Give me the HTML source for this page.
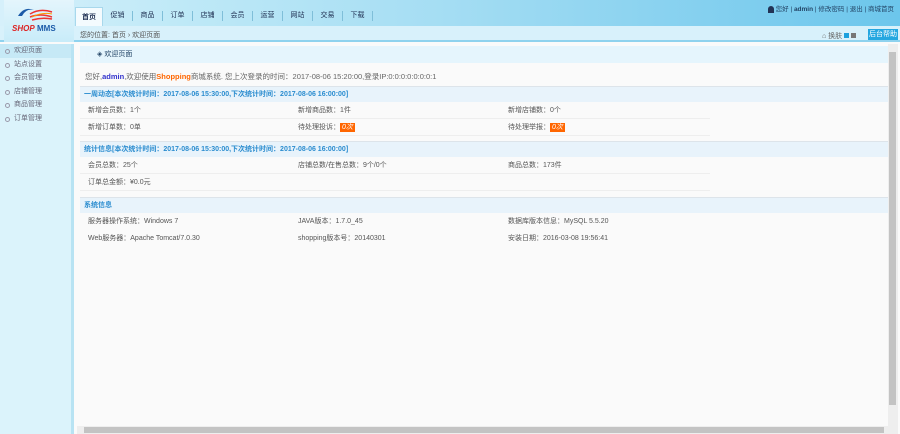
<!DOCTYPE html>
<html><head><meta charset="utf-8"><style>
*{margin:0;padding:0;box-sizing:border-box}
body{width:900px;height:434px;overflow:hidden;background:#fafafa;font-family:"Liberation Sans","Noto Sans CJK SC",sans-serif;font-size:7px;color:#555;position:relative}
.hdr{position:absolute;left:0;top:0;width:900px;height:26px;background:linear-gradient(90deg,#d6f0fb 0%,#bfe9f7 20%,#a4ddf3 50%,#6cc6ec 100%)}
.bc{position:absolute;left:0;top:26px;width:900px;height:16px;background:#d8f1fb;border-bottom:2px solid #8fd2ee}
.logo{position:absolute;left:4px;top:0;width:70px;height:42px;background:linear-gradient(#e4f5fc,#c8ecf9)}
.nav{position:absolute;left:75px;top:7px;height:19px;display:flex;white-space:nowrap}
.nav span{padding:0 7.5px;font-size:7px;color:#235;border-right:1px solid #7fbfd9;height:10px;line-height:10px;margin-top:4px}
.nav span.on{background:#f4fbfe;border:1px solid #a8d8ec;border-bottom:none;height:19px;line-height:19px;margin-top:0;font-weight:bold;padding:0 6px}
.side{position:absolute;left:0;top:44px;width:74px;height:390px;background:#dbf3fb;border-right:3px solid #b8e3f3}
.side div{height:13.5px;line-height:13.5px;padding-left:14px;color:#667;position:relative}
.side div:before{content:"";position:absolute;left:5px;top:5px;width:3px;height:3px;border:1px solid #99a;border-radius:50%}
.side div.on{background:#c6e9f6}
.main{position:absolute;left:77px;top:44px;width:811px;height:382px}
.wb{position:absolute;left:3px;top:2px;width:808px;height:17px;background:#e5f5fd;line-height:17px;padding-left:17px;color:#246;}
.sh{position:absolute;left:3px;width:808px;height:16px;background:#e8f3fb;border-top:1px solid #dde4ea;line-height:16px;padding-left:4px;color:#2a8ccf;font-weight:bold;white-space:nowrap}
.row{position:absolute;left:3px;width:630px;height:17px;border-bottom:1px solid #eee;line-height:17px;white-space:nowrap}
.row span{position:absolute}
.b{display:inline-block;background:#f60;color:#fff;padding:0 2px;line-height:9px}
.vs{position:absolute;left:888px;top:44px;width:10px;height:382px;background:#eee}
.vs i{position:absolute;left:1px;top:8px;width:7px;height:353px;background:#c3c3c3}
.hs{position:absolute;left:77px;top:426px;width:821px;height:8px;background:#eee}
.hs i{position:absolute;left:7px;top:1px;width:800px;height:6px;background:#c3c3c3}
</style></head><body>
<div class="hdr"></div>
<div class="bc"></div>
<div class="logo"><svg width="70" height="42"><path d="M14 16 q6 -10 16 -6 q-8 -2 -12 6" fill="#1b5aa8"/><path d="M26 14 q10 -6 22 -2 M26 17 q10 -4 22 0 M28 20 q10 -3 20 -1" stroke="#e33" stroke-width="1.5" fill="none"/><path d="M28 17 q10 -5 20 -3" stroke="#f90" stroke-width="1" fill="none"/><text x="8" y="31" font-size="8" font-style="italic" font-weight="bold" fill="#d22" font-family="Liberation Sans">SHOP</text><text x="33" y="31" font-size="8" font-weight="bold" fill="#1b5aa8" font-family="Liberation Sans">MMS</text></svg></div>
<div class="nav"><span class="on">首页</span><span>促销</span><span>商品</span><span>订单</span><span>店铺</span><span>会员</span><span>运营</span><span>网站</span><span>交易</span><span>下载</span></div>
<div style="position:absolute;left:80px;top:30px;color:#555">您的位置: 首页 › 欢迎页面</div>
<div style="position:absolute;right:6px;top:3px;color:#246;white-space:nowrap;font-size:6.5px"><span style="display:inline-block;width:6px;height:7px;background:#235;vertical-align:middle;border-radius:3px 3px 0 0"></span> 您好 | <b>admin</b> | 修改密码 | 退出 | 商城首页</div>
<div style="position:absolute;left:822px;top:31px;color:#666;white-space:nowrap">⌂ 换肤 <span style="display:inline-block;width:5px;height:5px;background:#1aa0dd"></span> <span style="display:inline-block;width:5px;height:5px;background:#777"></span></div>
<div style="position:absolute;left:868px;top:29px;width:30px;height:11px;background:#25a7e0;color:#fff;line-height:11px;text-align:center;white-space:nowrap">后台帮助</div>
<div class="side"><div class="on">欢迎页面</div><div>站点设置</div><div>会员管理</div><div>店铺管理</div><div>商品管理</div><div>订单管理</div></div>
<div class="main">
<div class="wb">◈ 欢迎页面</div>
<div style="position:absolute;left:8px;top:27px;font-size:7.5px;color:#666;white-space:nowrap">您好,<b style="color:#33c">admin</b>,欢迎使用<b style="color:#f60">Shopping</b>商城系统. 您上次登录的时间：2017-08-06 15:20:00,登录IP:0:0:0:0:0:0:0:1</div>
<div class="sh" style="top:42px">一周动态[本次统计时间：2017-08-06 15:30:00,下次统计时间：2017-08-06 16:00:00]</div>
<div class="row" style="top:58px"><span style="left:8px">新增会员数：1个</span><span style="left:218px">新增商品数：1件</span><span style="left:428px">新增店铺数：0个</span></div>
<div class="row" style="top:75px"><span style="left:8px">新增订单数：0单</span><span style="left:218px">待处理投诉：<i class="b">0次</i></span><span style="left:428px">待处理举报：<i class="b">0次</i></span></div>
<div class="sh" style="top:97px">统计信息[本次统计时间：2017-08-06 15:30:00,下次统计时间：2017-08-06 16:00:00]</div>
<div class="row" style="top:113px"><span style="left:8px">会员总数：25个</span><span style="left:218px">店铺总数/在售总数：9个/0个</span><span style="left:428px">商品总数：173件</span></div>
<div class="row" style="top:130px"><span style="left:8px">订单总金额：¥0.0元</span></div>
<div class="sh" style="top:153px">系统信息</div>
<div class="row" style="top:169px;border:none"><span style="left:8px">服务器操作系统：Windows 7</span><span style="left:218px">JAVA版本：1.7.0_45</span><span style="left:428px">数据库版本信息：MySQL 5.5.20</span></div>
<div class="row" style="top:186px;border:none"><span style="left:8px">Web服务器：Apache Tomcat/7.0.30</span><span style="left:218px">shopping版本号：20140301</span><span style="left:428px">安装日期：2016-03-08 19:56:41</span></div>
</div>
<div class="vs"><i></i></div>
<div class="hs"><i></i></div>
</body></html>
